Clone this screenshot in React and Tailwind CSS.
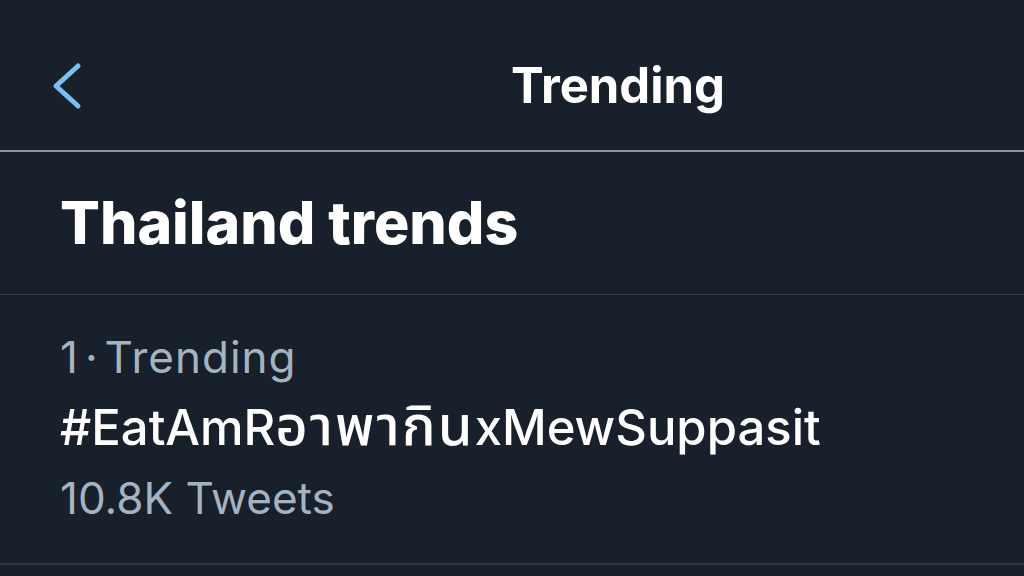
export default function App() {
  return (
    <div className="w-[1024px] h-[576px] bg-[#18202b] overflow-hidden text-white" style={{ fontFamily: 'Inter, "Noto Sans", "Noto Sans Thai", "DejaVu Sans", sans-serif' }}>
      <div className="relative h-[150px] flex items-center justify-center">
        <svg className="absolute left-[50px] top-[60px]" width="36" height="52" viewBox="0 0 36 52" fill="none">
          <path d="M28 6 L6 26 L28 46" stroke="#7cc0f2" strokeWidth="5" strokeLinecap="round" strokeLinejoin="round" />
        </svg>
        <div className="text-[49px] font-bold leading-none pt-[20px] ml-[212px]">Trending</div>
      </div>
      <div className="h-[2px] bg-[#8e949d]" />
      <div className="h-[142px] pl-[60px] flex items-center">
        <div className="text-[59px] font-extrabold leading-none pb-[2px]">Thailand trends</div>
      </div>
      <div className="h-[1px] bg-[#363d49]" />
      <div className="pl-[60px] pt-[34px] flex flex-col">
        <div className="text-[44px] text-[#a5b3c1] leading-[56px] whitespace-nowrap">
          <span>1</span>
          <span className="ml-[7px]">·</span>
          <span className="ml-[7px] tracking-[1px]">Trending</span>
        </div>
        <div className="h-[85px] text-[49px] font-medium leading-[85px] whitespace-nowrap">
          #EatAmR<span className="text-[56px] font-medium leading-none tracking-[2px]">อาพากิน</span>xMewSuppasit
        </div>
        <div className="text-[44px] text-[#a5b3c1] leading-[56px]">10.8K Tweets</div>
      </div>
      <div className="mt-[37px] h-[2px] bg-[#2f3642]" />
    </div>
  );
}
